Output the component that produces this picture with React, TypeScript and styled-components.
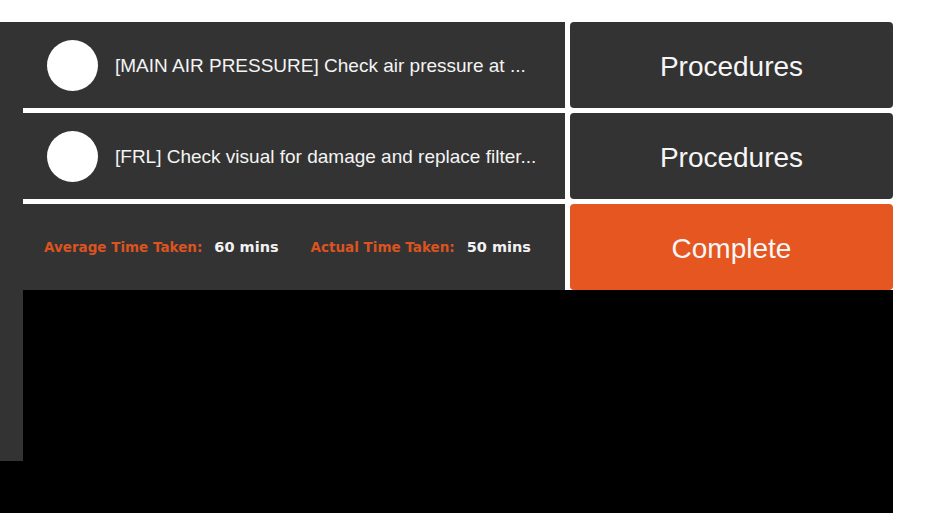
import React from 'react';
import styled, { createGlobalStyle } from 'styled-components';

const GlobalStyle = createGlobalStyle`
  html, body {
    margin: 0;
    padding: 0;
    background: #ffffff;
    font-family: "Liberation Sans", Arial, sans-serif;
  }
`;

const Page = styled.div`
  padding-top: 22px;
`;

const Frame = styled.div`
  display: flex;
  align-items: flex-start;
  width: 893px;
  height: 491px;
  background: #000000;
  overflow: hidden;
`;

const Sidebar = styled.aside`
  flex-shrink: 0;
  width: 23px;
  height: 439px;
  background: #333333;
`;

const Main = styled.main`
  flex: 1;
  display: flex;
  flex-direction: column;
`;

const TaskGrid = styled.div`
  display: grid;
  grid-template-columns: 542px 323px;
  grid-auto-rows: 86px;
  gap: 5px;
  background: #ffffff;
`;

const TaskCell = styled.div`
  display: flex;
  align-items: center;
  gap: 17px;
  padding-left: 24px;
  background: #333333;
  min-width: 0;
`;

const CheckCircle = styled.span`
  flex-shrink: 0;
  width: 51px;
  height: 51px;
  border-radius: 50%;
  background: #ffffff;
`;

const TaskText = styled.span`
  padding-top: 2px;
  font-size: 19px;
  color: #f4f4f4;
  white-space: nowrap;
  overflow: hidden;
`;

const StatsCell = styled.div`
  display: flex;
  align-items: center;
  gap: 32px;
  padding-left: 21px;
  background: #333333;
`;

const Stat = styled.div`
  display: flex;
  align-items: baseline;
  gap: 12px;
  font-family: "DejaVu Sans", Verdana, sans-serif;
  font-weight: 700;
`;

const StatLabel = styled.span`
  font-size: 13.5px;
  color: #dc5320;
`;

const StatValue = styled.span`
  font-size: 14.5px;
  color: #f2f2f2;
`;

const ActionButton = styled.button<{ $primary?: boolean }>`
  display: flex;
  align-items: center;
  justify-content: center;
  border: none;
  border-radius: 4px;
  padding: 3px 0 0;
  background: ${(p) => (p.$primary ? '#e55621' : '#333333')};
  color: #f6f6f6;
  font-family: "Liberation Sans", Arial, sans-serif;
  font-size: 28px;
  cursor: pointer;
`;

const tasks = [
  '[MAIN AIR PRESSURE] Check air pressure at ...',
  '[FRL] Check visual for damage and replace filter...',
];

export default function App() {
  return (
    <>
      <GlobalStyle />
      <Page>
        <Frame>
          <Sidebar />
          <Main>
            <TaskGrid>
              {tasks.map((t) => (
                <React.Fragment key={t}>
                  <TaskCell>
                    <CheckCircle />
                    <TaskText>{t}</TaskText>
                  </TaskCell>
                  <ActionButton>Procedures</ActionButton>
                </React.Fragment>
              ))}
              <StatsCell>
                <Stat>
                  <StatLabel>Average Time Taken:</StatLabel>
                  <StatValue>60 mins</StatValue>
                </Stat>
                <Stat>
                  <StatLabel>Actual Time Taken:</StatLabel>
                  <StatValue>50 mins</StatValue>
                </Stat>
              </StatsCell>
              <ActionButton $primary>Complete</ActionButton>
            </TaskGrid>
          </Main>
        </Frame>
      </Page>
    </>
  );
}
